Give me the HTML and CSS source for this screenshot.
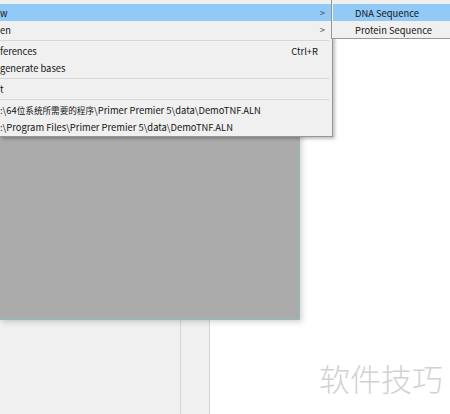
FILE: index.html
```html
<!DOCTYPE html>
<html>
<head>
<meta charset="utf-8">
<link rel="stylesheet" href="styles.css">
</head>
<body>
<div class="app">
  <div class="sidebar"></div>
  <div class="ruler"></div>
  <div class="workspace"></div>

  <div class="dialog"></div>

  <div class="menu">
    <div class="item active"><span class="label">w</span><span class="arrow">&gt;</span></div>
    <div class="item"><span class="label">en</span><span class="arrow">&gt;</span></div>
    <div class="sep"></div>
    <div class="item"><span class="label">ferences</span><span class="shortcut">Ctrl+R</span></div>
    <div class="item"><span class="label">generate bases</span></div>
    <div class="sep"></div>
    <div class="item"><span class="label">t</span></div>
    <div class="sep"></div>
    <div class="item"><span class="label">:\64<span class="cjk">位系统所需要的程序</span>\Primer Premier 5\data\DemoTNF.ALN</span></div>
    <div class="item"><span class="label">:\Program Files\Primer Premier 5\data\DemoTNF.ALN</span></div>
  </div>

  <div class="submenu">
    <div class="item active"><span class="label">DNA Sequence</span></div>
    <div class="item"><span class="label">Protein Sequence</span></div>
  </div>

  <div class="watermark">软件技巧</div>
</div>
</body>
</html>
```

FILE: styles.css
```css
html, body {
  margin: 0;
  padding: 0;
}
body {
  width: 450px;
  height: 414px;
  overflow: hidden;
  background: #ffffff;
  font-family: "Noto Sans CJK SC", "Open Sans", sans-serif;
  font-size: 9.4px;
  color: #141414;
}
.app {
  position: relative;
  display: flex;
  width: 450px;
  height: 414px;
}
.sidebar {
  width: 180px;
  background: #f0f0f0;
  border-right: 1px solid #d6d6d6;
}
.ruler {
  width: 28px;
  background: #f0f0f0;
  border-right: 1px solid #d6d6d6;
}
.workspace {
  flex: 1;
  background: #ffffff;
}
.dialog {
  position: absolute;
  left: 0;
  top: 0;
  width: 300px;
  height: 320px;
  box-sizing: border-box;
  background: #ababab;
  border-right: 1px solid #8dbcbc;
  border-bottom: 1px solid #8dbcbc;
  box-shadow: 2px 2px 6px rgba(0, 0, 0, 0.18);
}
.menu {
  position: absolute;
  left: 0;
  top: 0;
  width: 333px;
  box-sizing: border-box;
  background: #f0f0f0;
  border-right: 1px solid #979797;
  border-bottom: 1px solid #979797;
  box-shadow: 2px 2px 3px rgba(0, 0, 0, 0.25);
  padding: 4px 1px 1px 0;
}
.item {
  display: flex;
  align-items: center;
  height: 17px;
  white-space: nowrap;
}
.item.active {
  background: #91c9f7;
}
.label {
  flex: 1;
}
.cjk {
  font-size: 8.6px;
}
.shortcut {
  padding-right: 13px;
}
.arrow {
  padding-right: 6px;
  font-size: 9px;
  color: #444444;
}
.sep {
  height: 4px;
  display: flex;
  align-items: center;
}
.sep::before {
  content: "";
  display: block;
  width: 100%;
  height: 1px;
  margin-right: 2px;
  background: #d7d7d7;
}
.submenu {
  position: absolute;
  left: 331px;
  top: 0;
  width: 130px;
  box-sizing: border-box;
  background: #f0f0f0;
  border-left: 1px solid #979797;
  border-bottom: 1px solid #979797;
  padding: 4px 0 0 1px;
  height: 39px;
}
.submenu .label {
  padding-left: 22px;
}
.watermark {
  position: absolute;
  left: 319px;
  top: 355px;
  font-size: 31px;
  color: #d2d2d2;
  font-family: "Noto Sans CJK SC", sans-serif;
  font-weight: 300;
}
```
